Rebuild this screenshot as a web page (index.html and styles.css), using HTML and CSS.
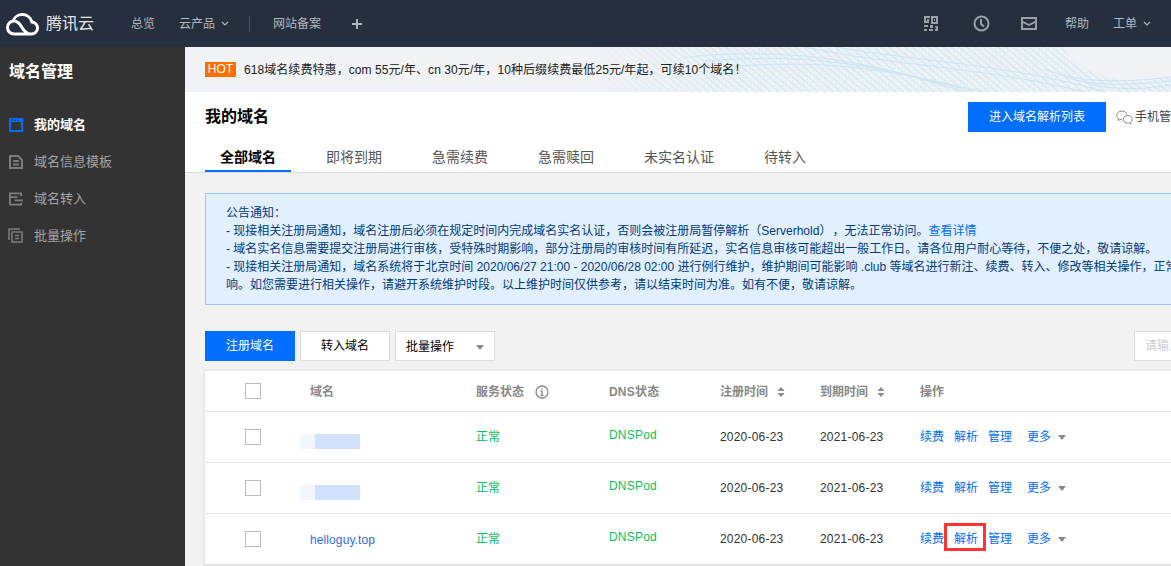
FILE: index.html
```html
<!DOCTYPE html>
<html lang="zh-CN">
<head>
<meta charset="utf-8">
<title>域名管理</title>
<link rel="stylesheet" href="styles.css">
</head>
<body>
<div class="app">
  <header class="topbar">
    <svg class="logo" viewBox="0 0 34 24" width="34" height="24"><path d="M9 22h17a6 6 0 0 0 1-12 10 10 0 0 0-19-1 M9 22a6.500 6.500 0 0 1 0-13c4 0 6 3 8 6.500s4 6.500 9 6.500" fill="none" stroke="#fff" stroke-width="3" stroke-linecap="round"/></svg>
    <span class="brand">腾讯云</span>
    <nav class="nav">
      <a class="nav-first">总览</a>
      <a class="nav-prod">云产品<svg class="chev" width="8" height="5" viewBox="0 0 8 5"><path d="M1 1l3 3 3-3" fill="none" stroke="#aeb4bd" stroke-width="1.200"/></svg></a>
      <i class="divider"></i>
      <a>网站备案</a>
      <svg class="plus" width="12" height="12" viewBox="0 0 12 12"><path d="M6 1v10M1 6h10" stroke="#aeb4bd" stroke-width="2"/></svg>
    </nav>
    <div class="top-right">
      <svg class="ti-qr" width="15" height="15" viewBox="0 0 15 15" fill="#9a9ea5"><path d="M0 0h6v2H2v3h3v2H0zM7 0h7v8H7zM9 2v4h3V2z"/><path d="M10 3h1v2h-1zM3 3h2v2H3zM0 9h4v2H0zM6 9h3v3H6zM11 10h3v5h-3v-2h1zM0 13h3v2H0zM5 13h4v2H5z"/></svg>
      <svg class="ti-clock" width="17" height="17" viewBox="0 0 17 17" fill="none" stroke="#9a9ea5" stroke-width="2"><circle cx="8.500" cy="8.500" r="7"/><path d="M8 4v5l3 2.500"/></svg>
      <svg class="ti-mail" width="16" height="13" viewBox="0 0 16 13"><path fill="#9a9ea5" d="M0 0h16v13H0z"/><path fill="#262f3e" d="M2 2h12v2L8 7 2 4zM2 6l6 3 6-3v5H2z"/></svg>
      <a class="t-help">帮助</a>
      <a class="t-order">工单<svg class="chev" width="8" height="5" viewBox="0 0 8 5"><path d="M1 1l3 3 3-3" fill="none" stroke="#aeb4bd" stroke-width="1.200"/></svg></a>
    </div>
  </header>
  <div class="main">
    <aside class="sidebar">
      <h2 class="side-title">域名管理</h2>
      <ul class="side-list">
        <li class="side-item active"><svg width="14" height="14" viewBox="0 0 14 14"><path fill="#006eff" d="M0 0h14v14H0z"/><path fill="#333" d="M2 4h10v8H2zM2 1.500h1.500V3H2zM5 1.500h1.500V3H5zM8 1.500h1.500V3H8z"/></svg>我的域名</li>
        <li class="side-item"><svg width="14" height="14" viewBox="0 0 14 14" fill="none" stroke="#7c7c7c" stroke-width="2"><path d="M1 1h8l4 4v8H1zM4 6h6M4 9.500h6"/></svg>域名信息模板</li>
        <li class="side-item"><svg width="14" height="14" viewBox="0 0 15 14" fill="none" stroke="#7c7c7c" stroke-width="2"><path d="M13 4V1H1v12h12v-2M1 5h8M6 8.500h9"/></svg>域名转入</li>
        <li class="side-item"><svg class="ic-batch" width="15" height="15" viewBox="0 0 15 15" fill="none" stroke="#7c7c7c" stroke-width="1.600"><path d="M1 12V1h11M4 4h10v10H4zM7 7.500h4M7 10.500h4"/></svg>批量操作</li>
      </ul>
    </aside>
    <main class="content">
      <section class="banner">
        <svg class="banner-art" width="986" height="45" viewBox="0 0 986 45">
          <defs>
            <pattern id="hatch" width="5" height="5" patternUnits="userSpaceOnUse" patternTransform="rotate(40)"><path d="M0 2.500h5" stroke="#c6e5f1" stroke-width="1"/><path d="M2.500 0v5" stroke="#e0eff5" stroke-width="1"/></pattern>
            <linearGradient id="fade" gradientUnits="userSpaceOnUse" x1="400" x2="530" y1="0" y2="0"><stop offset="0" stop-color="#fff" stop-opacity="0"/><stop offset="1" stop-color="#fff" stop-opacity="1"/></linearGradient>
            <mask id="fademask"><rect width="986" height="45" fill="url(#fade)"/></mask>
          </defs>
          <g mask="url(#fademask)">
            <path d="M400 0H878C890 18 905 28 935 33 960 37 975 31 986 29V45H400z" fill="url(#hatch)"/>
            <g fill="none" stroke="#c6e5f1">
              <path d="M500 10C620 -2 700 20 780 45"/><path d="M520 14C640 4 710 24 790 45"/><path d="M540 20C660 10 720 28 800 45"/>
              <path d="M620 0C700 18 800 20 900 45"/><path d="M650 0C730 14 830 18 920 45"/>
              <path d="M860 22C890 36 940 36 986 30" stroke="#c9e2f6"/><path d="M880 30C910 40 950 38 986 34" stroke="#c9e2f6"/><path d="M900 36C930 44 960 42 986 38" stroke="#c9e2f6"/>
            </g>
          </g>
        </svg>
        <span class="hot">HOT</span><span class="banner-text">618域名续费特惠，com 55元/年、cn 30元/年，10种后缀续费最低25元/年起，可续10个域名！</span>
      </section>
      <section class="head">
        <div class="head-row">
          <h1 class="page-title">我的域名</h1>
          <a class="btn btn-primary btn-list">进入域名解析列表</a>
          <span class="mobile"><svg width="17" height="15" viewBox="0 0 17 15" fill="none" stroke="#888" stroke-width="1"><path d="M11 4.500C10.500 2.500 8.500 1 6 1 3 1 .700 3 .700 5.300c0 1.400.8 2.600 2 3.400L2.300 10.500l2-1c.5.100 1 .2 1.700.2"/><path d="M16.300 9.300c0-2.200-2-3.800-4.500-3.800S7.300 7.100 7.300 9.300s2 3.800 4.500 3.800c.5 0 1 0 1.500-.2l1.700 1-.4-1.600c1.100-.7 1.700-1.800 1.700-3z"/></svg>手机管理</span>
        </div>
        <div class="tabs">
          <a class="tab current">全部域名</a><a class="tab">即将到期</a><a class="tab">急需续费</a><a class="tab">急需赎回</a><a class="tab">未实名认证</a><a class="tab">待转入</a>
        </div>
      </section>
      <section class="notice">
        <p>公告通知：</p>
        <p>- 现接相关注册局通知，域名注册后必须在规定时间内完成域名实名认证，否则会被注册局暂停解析（Serverhold<span class="paren">）</span>，无法正常访问。<a class="link">查看详情</a></p>
        <p>- 域名实名信息需要提交注册局进行审核，受特殊时期影响，部分注册局的审核时间有所延迟，实名信息审核可能超出一般工作日。请各位用户耐心等待，不便之处，敬请谅解。</p>
        <p>- 现接相关注册局通知，域名系统将于北京时间 2020/06/27 21:00 - 2020/06/28 02:00 进行例行维护，维护期间可能影响 .club 等域名进行新注、续费、转入、修改等相关操作，正常解析不受影</p>
        <p>响。如您需要进行相关操作，请避开系统维护时段。以上维护时间仅供参考，请以结束时间为准。如有不便，敬请谅解。</p>
      </section>
      <section class="toolbar">
        <div class="tool-left">
          <a class="btn btn-primary btn-reg">注册域名</a>
          <a class="btn btn-default">转入域名</a>
          <span class="select">批量操作<i class="caret"></i></span>
        </div>
        <span class="search">请输入域名</span>
      </section>
      <section class="table">
        <div class="tr th">
          <div class="c-check"><i class="checkbox"></i></div>
          <div>域名</div>
          <div class="th-status">服务状态<svg width="14" height="14" viewBox="0 0 14 14" fill="none" stroke="#888"><circle cx="7" cy="7" r="6" stroke-width="1.300"/><path d="M7 6v4.500M7 3.200v1.600M5.500 6h1.500M5.500 10.500h3" stroke-width="1.300"/></svg></div>
          <div class="dns-h">DNS状态</div>
          <div class="sortable">注册时间<svg width="8" height="10" viewBox="0 0 8 10" fill="#888"><path d="M4 0l3.500 4h-7zM4 10L.5 6h7z"/></svg></div>
          <div class="sortable">到期时间<svg width="8" height="10" viewBox="0 0 8 10" fill="#888"><path d="M4 0l3.500 4h-7zM4 10L.5 6h7z"/></svg></div>
          <div>操作</div>
        </div>
        <div class="tr">
          <div class="c-check"><i class="checkbox"></i></div>
          <div><i class="mosaic mosaic-a"></i></div>
          <div class="ok">正常</div>
          <div class="ok dns">DNSPod</div>
          <div class="date">2020-06-23</div>
          <div class="date">2021-06-23</div>
          <div class="ops"><a>续费</a><a>解析</a><a>管理</a><a class="more">更多</a><i class="caret caret-sm"></i></div>
        </div>
        <div class="tr">
          <div class="c-check"><i class="checkbox"></i></div>
          <div><i class="mosaic mosaic-b"></i></div>
          <div class="ok">正常</div>
          <div class="ok dns">DNSPod</div>
          <div class="date">2020-06-23</div>
          <div class="date">2021-06-23</div>
          <div class="ops"><a>续费</a><a>解析</a><a>管理</a><a class="more">更多</a><i class="caret caret-sm"></i></div>
        </div>
        <div class="tr">
          <div class="c-check"><i class="checkbox"></i></div>
          <div><a class="domain">helloguy.top</a></div>
          <div class="ok">正常</div>
          <div class="ok dns">DNSPod</div>
          <div class="date">2020-06-23</div>
          <div class="date">2021-06-23</div>
          <div class="ops"><a>续费</a><a class="marked">解析</a><a>管理</a><a class="more">更多</a><i class="caret caret-sm"></i></div>
        </div>
      </section>
    </main>
  </div>
</div>
</body>
</html>
```

FILE: styles.css
```css
* { box-sizing: border-box; }
html, body { margin: 0; height: 100%; overflow: hidden; }
body { font: 12px/18px "Liberation Sans", "Noto Sans CJK SC", sans-serif; color: #333; background: #f2f2f2; }
p, h1, h2, ul { margin: 0; padding: 0; }
i { display: block; font-style: normal; }
.app { display: flex; flex-direction: column; height: 566px; width: 1171px; overflow: hidden; }

.topbar { flex: none; height: 47px; background: #262f3e; display: flex; align-items: center; color: #b4b8bf; padding-left: 5px; }
.logo { flex: none; }
.brand { margin-left: 7px; font-size: 16px; color: #e2e4e7; width: 85px; flex: none; white-space: nowrap; }
.nav { display: flex; align-items: center; }
.nav-first { margin-right: 24px; }
.nav-prod { display: flex; align-items: center; white-space: nowrap; }
.chev { margin-left: 6px; }
.divider { width: 1px; height: 16px; background: #4a5261; margin: 0 23px 0 20px; }
.plus { margin-left: 30px; }
.top-right { margin-left: auto; display: flex; align-items: center; padding-right: 20px; }
.ti-clock { margin-left: 34px; }
.ti-mail { margin-left: 31px; }
.t-help { margin-left: 28px; }
.t-order { margin-left: 24px; display: flex; align-items: center; }

.main { flex: 1; display: flex; min-height: 0; }
.sidebar { flex: none; width: 185px; background: #333; color: #a3a3a3; }
.side-title { font-size: 16px; line-height: 50px; font-weight: 700; color: #fff; padding-left: 9px; }
.side-list { list-style: none; padding-top: 9px; }
.side-item { display: flex; align-items: center; height: 37px; padding-left: 9px; font-size: 13px; gap: 11px; white-space: nowrap; }
.side-item.active { color: #fff; font-weight: 700; }
.ic-batch { margin-left: -1px; }

.content { flex: 1; min-width: 0; overflow: hidden; }
.banner { position: relative; height: 45px; background: #f0f2f5; display: flex; align-items: center; padding-left: 20px; color: #222; white-space: nowrap; }
.banner-art { position: absolute; left: 0; top: 0; }
.hot { position: relative; width: 31px; height: 15px; background: #ff6e00; color: #fff; line-height: 15px; text-align: center; margin-right: 8px; }
.banner-text { position: relative; letter-spacing: .07px; }

.head { height: 81px; background: #fff; border-bottom: 1px solid #ddd; padding: 10px 0 0 20px; white-space: nowrap; }
.head-row { display: flex; align-items: center; height: 30px; }
.page-title { font-size: 16px; line-height: 30px; font-weight: 700; color: #000; flex: none; width: 763px; }
.btn { display: block; height: 30px; line-height: 30px; text-align: center; flex: none; }
.btn-primary { background: #006eff; color: #fff; }
.btn-list { width: 138px; }
.mobile { display: flex; align-items: center; margin-left: 10px; gap: 2px; color: #444; }
.tabs { display: flex; margin-top: 14px; }
.tab { font-size: 14px; line-height: 23px; height: 23px; padding: 0 15px; margin-right: 20px; color: #555; }
.tab.current { color: #000; font-weight: 700; border-bottom: 2px solid #006eff; height: 26px; }

.notice { margin: 20px 0 0 20px; width: 1300px; height: 112px; padding: 10px 20px 0; background: #e2effe; border: 1px solid #9dc6f8; color: #003b80; white-space: nowrap; }
.link { color: #006eff; }
.paren { margin-right: 7px; }

.toolbar { display: flex; margin: 26px 0 0 20px; }
.tool-left { display: flex; gap: 5px; flex: none; width: 929px; }
.btn-reg { width: 90px; }
.btn-default { width: 90px; background: #fff; border: 1px solid #ddd; line-height: 28px; color: #000; }
.select { display: flex; align-items: center; width: 100px; height: 30px; background: #fff; border: 1px solid #ddd; padding: 2px 0 0 10px; color: #000; }
.caret { width: 0; height: 0; border: 4px solid transparent; border-top: 5px solid #888; border-bottom: 0; }
.select .caret { margin-left: 22px; }
.search { flex: none; width: 200px; height: 30px; background: #fff; border: 1px solid #ddd; padding-left: 10px; line-height: 28px; color: #ccc; white-space: nowrap; }

.table { margin: 10px 0 0 20px; width: 1300px; background: #fff; box-shadow: 0 0 4px rgba(0,0,0,.12); }
.tr { display: grid; grid-template-columns: 105px 166px 133px 111px 100px 100px 1fr; align-items: center; height: 51px; border-bottom: 1px solid #e2e2e2; white-space: nowrap; }
.th { height: 41px; color: #888; font-weight: 700; }
.th div + div { padding-top: 2px; }
.c-check { padding-left: 40px; display: flex; }
.checkbox { width: 16px; height: 16px; background: #fff; border: 1px solid #bbb; }
.th-status { display: flex; align-items: center; gap: 11px; }
.sortable { display: flex; align-items: center; gap: 9px; }
.dns-h { letter-spacing: .2px; }
.ok { color: #0abf5b; }
.dns { padding-bottom: 5px; letter-spacing: .2px; }
.date { letter-spacing: .2px; }
.domain { color: #2f6fe6; display: block; padding-top: 2px; letter-spacing: .1px; }
.mosaic { height: 15px; width: 60px; margin-left: -10px; background: linear-gradient(90deg, #f0f5fe 25%, #d2e2fc 25%); }
.mosaic-a { margin-top: 9px; }
.mosaic-b { margin-top: 8px; }
.ops { display: flex; align-items: center; gap: 10px; color: #006eff; }
.more { margin-left: 5px; }
.caret-sm { margin-left: -3px; }
.marked { position: relative; }
.marked::after { content: ""; position: absolute; left: -10px; right: -8px; top: -7px; bottom: -3px; border: 3px solid #f33; }
```
